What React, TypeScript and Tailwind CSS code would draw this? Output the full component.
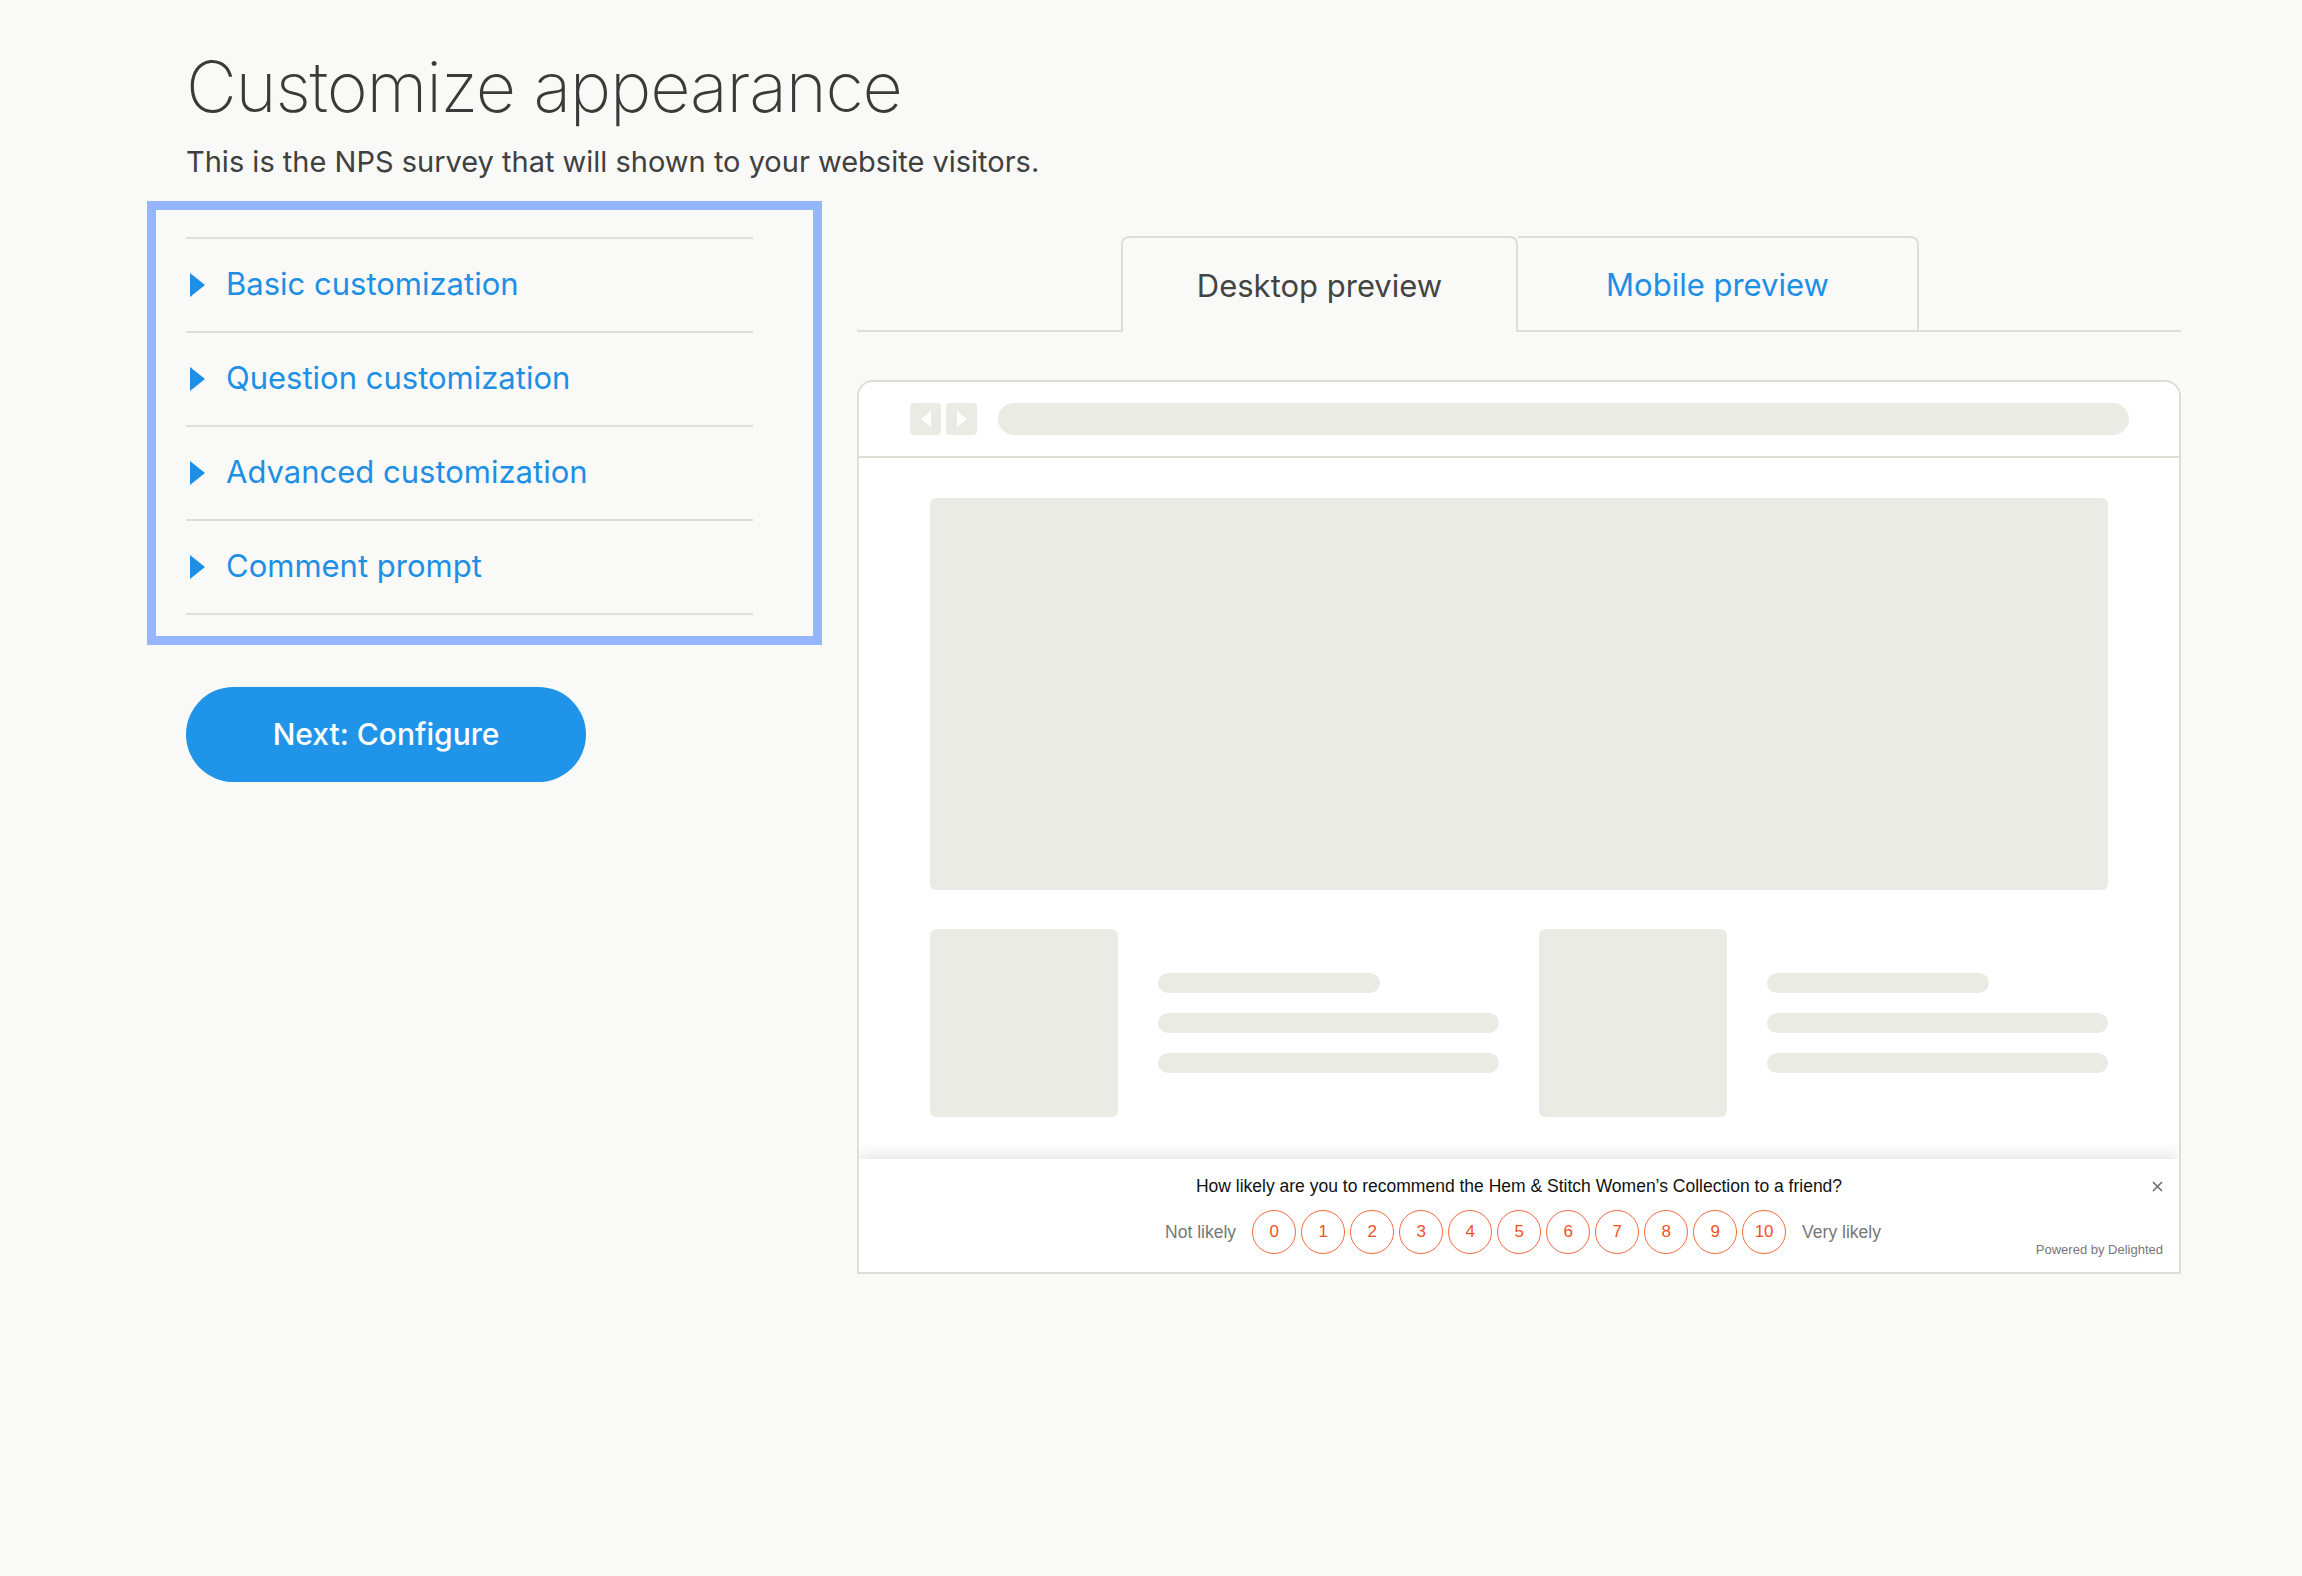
import React from "react";

const items = [
  "Basic customization",
  "Question customization",
  "Advanced customization",
  "Comment prompt",
];

function Caret() {
  return (
    <svg width="15" height="24" viewBox="0 0 15 24" className="shrink-0">
      <polygon points="0,0 15,12 0,24" fill="#1d8fe5" />
    </svg>
  );
}

function NavBtn({ dir }: { dir: "l" | "r" }) {
  return (
    <div className="w-[31px] h-[32px] rounded-[4px] bg-[#ebebe6] flex items-center justify-center">
      <svg width="12" height="16" viewBox="0 0 12 16">
        {dir === "l" ? (
          <polygon points="11,0 11,16 1,8" fill="#ffffff" />
        ) : (
          <polygon points="1,0 1,16 11,8" fill="#ffffff" />
        )}
      </svg>
    </div>
  );
}

function CardRow() {
  return (
    <div className="flex items-center gap-[40px]">
      <div className="w-[188px] h-[188px] rounded-[6px] bg-[#ebebe6] shrink-0" />
      <div className="flex-1 flex flex-col gap-[20px]">
        <div className="w-[222px] h-[20px] rounded-full bg-[#ebebe6]" />
        <div className="w-full h-[20px] rounded-full bg-[#ebebe6]" />
        <div className="w-full h-[20px] rounded-full bg-[#ebebe6]" />
      </div>
    </div>
  );
}

export default function App() {
  return (
    <div className="min-h-screen w-full bg-[#f9f9f7] font-['Inter',sans-serif]">
      <div className="pl-[186px] pt-[52px]">
        <h1 className="text-[70px] leading-[70px] font-extralight text-[#3a3a3a] tracking-[-1.2px]">
          Customize appearance
        </h1>
        <p className="mt-[22px] text-[29px] leading-[36px] text-[#404040]">
          This is the NPS survey that will shown to your website visitors.
        </p>

        <div className="mt-[21px] -ml-[39px] flex items-start">
          {/* Left column */}
          <div className="w-[675px] shrink-0">
            <div className="border-[9px] border-[#95b5fc] pl-[30px] pr-[60px] pt-[27px] pb-[21px]">
              {items.map((t, i) => (
                <div
                  key={t}
                  className={
                    "flex items-center h-[94px] border-t-2 border-[#deded6] " +
                    (i === items.length - 1 ? "border-b-2 h-[96px]" : "")
                  }
                >
                  <div className="ml-[4px]">
                    <Caret />
                  </div>
                  <span className="ml-[21px] pb-[2px] text-[31px] leading-[36px] text-[#1d8fe5]">
                    {t}
                  </span>
                </div>
              ))}
            </div>
            <button className="mt-[42px] ml-[39px] w-[400px] h-[95px] rounded-full bg-[#2094e9] text-white text-[30px] font-medium flex items-center justify-center">
              Next: Configure
            </button>
          </div>

          {/* Right column */}
          <div className="ml-[35px] w-[1324px] shrink-0 mt-[35px]">
            <div className="flex h-[96px]">
              <div className="w-[264px] border-b-2 border-[#deded6]" />
              <div className="w-[397px] border-2 border-b-0 border-[#deded6] rounded-t-[8px] flex items-center justify-center pt-[2px] text-[31px] text-[#444444]">
                Desktop preview
              </div>
              <div className="w-[401px] border-t-2 border-r-2 border-b-2 border-[#deded6] rounded-tr-[8px] flex items-center justify-center pt-[2px] text-[31px] text-[#1d8fe5]">
                Mobile preview
              </div>
              <div className="flex-1 border-b-2 border-[#deded6]" />
            </div>

            <div className="mt-[48px] border-2 border-[#deded6] rounded-t-[16px] bg-white overflow-hidden">
              <div className="h-[76px] flex items-center pl-[51px] pr-[50px] border-b-2 border-[#deded6]">
                <div className="flex gap-[5px]">
                  <NavBtn dir="l" />
                  <NavBtn dir="r" />
                </div>
                <div className="ml-[21px] flex-1 h-[32px] rounded-full bg-[#ebebe6]" />
              </div>

              <div className="pt-[40px] px-[71px]">
                <div className="h-[392px] rounded-[6px] bg-[#ebebe6]" />
                <div className="mt-[39px] grid grid-cols-2 gap-x-[40px]">
                  <CardRow />
                  <CardRow />
                </div>
              </div>

              <div className="relative mt-[42px] h-[113px] bg-white pt-[16px] shadow-[0_-5px_14px_rgba(0,0,0,0.10)] font-['Liberation_Sans',Arial,sans-serif]">
                <p className="text-center text-[17.5px] leading-[22px] text-[#111111]">
                  How likely are you to recommend the Hem &amp; Stitch Women’s Collection to a friend?
                </p>
                <div className="mt-[13px] pl-[8px] flex items-center justify-center">
                  <span className="mr-[16px] text-[17.5px] text-[#777777]">Not likely</span>
                  <div className="flex gap-[5px]">
                    {Array.from({ length: 11 }, (_, n) => (
                      <div
                        key={n}
                        className="w-[44px] h-[44px] rounded-full border border-[#f26a3f] text-[#f4511e] text-[17px] flex items-center justify-center"
                      >
                        {n}
                      </div>
                    ))}
                  </div>
                  <span className="ml-[16px] text-[17.5px] text-[#777777]">Very likely</span>
                </div>
                <svg
                  width="11"
                  height="11"
                  viewBox="0 0 11 11"
                  className="absolute right-[16px] top-[22px]"
                >
                  <path d="M1 1 L10 10 M10 1 L1 10" stroke="#666666" strokeWidth="1.5" />
                </svg>
                <span className="absolute right-[16px] bottom-[14px] text-[13px] leading-[16px] text-[#777777]">
                  Powered by Delighted
                </span>
              </div>
            </div>
          </div>
        </div>
      </div>
    </div>
  );
}
